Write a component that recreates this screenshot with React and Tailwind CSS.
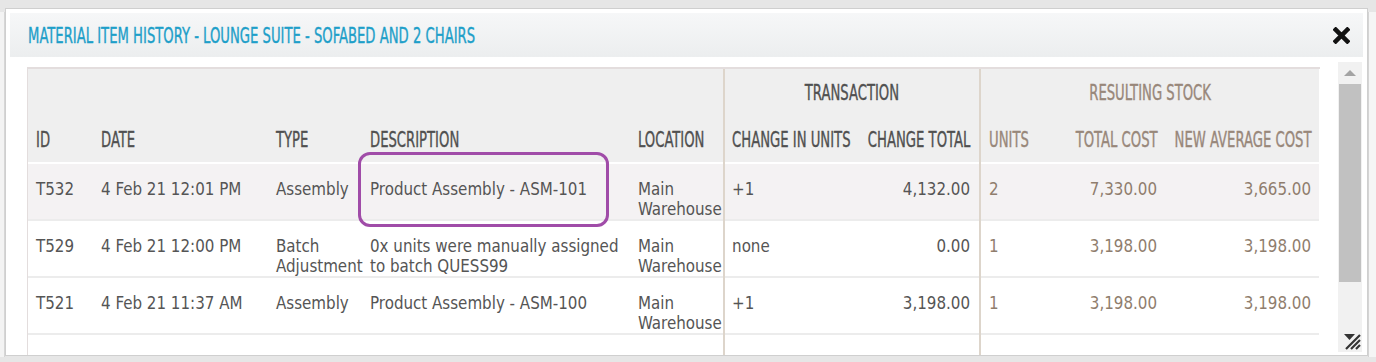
import React from "react";

const head = { fontFamily: '"DejaVu Sans Condensed", "DejaVu Sans", sans-serif' };
const body = { fontFamily: '"DejaVu Sans Condensed", "DejaVu Sans", sans-serif' };

const rows = [
  { id: "T532", date: "4 Feb 21 12:01 PM", type: "Assembly", desc: "Product Assembly - ASM-101", change: "+1", total: "4,132.00", units: "2", cost: "7,330.00", avg: "3,665.00", hi: true },
  { id: "T529", date: "4 Feb 21 12:00 PM", type: "Batch Adjustment", desc: "0x units were manually assigned to batch QUESS99", change: "none", total: "0.00", units: "1", cost: "3,198.00", avg: "3,198.00" },
  { id: "T521", date: "4 Feb 21 11:37 AM", type: "Assembly", desc: "Product Assembly - ASM-100", change: "+1", total: "3,198.00", units: "1", cost: "3,198.00", avg: "3,198.00" },
];

function CloseIcon() {
  return (
    <svg width="17" height="17" viewBox="0 0 16 16">
      <path d="M2.5 2.5 L13.5 13.5 M13.5 2.5 L2.5 13.5" stroke="#111" strokeWidth="4.2" strokeLinecap="square" />
    </svg>
  );
}

function Grip() {
  return (
    <svg width="18" height="18" viewBox="0 0 18 18">
      <path d="M1 2 L12 2 L6.5 8 Z" fill="#333" />
      <path d="M3 17 L17 3 M8 17 L17 8 M13 17 L17 13" stroke="#333" strokeWidth="2.2" />
    </svg>
  );
}

// narrow caps label: condensed face squeezed horizontally
function H({ children, align = "left" }) {
  const j = align === "right" ? "justify-end" : align === "center" ? "justify-center" : "justify-start";
  const o = align === "right" ? "origin-right" : align === "center" ? "origin-center" : "origin-left";
  return (
    <div className={`flex ${j}`}>
      <span className={`inline-block whitespace-nowrap scale-x-[0.715] [-webkit-text-stroke:0.35px] ${o}`}>{children}</span>
    </div>
  );
}

export default function App() {
  return (
    <div className="w-[1376px] h-[362px] bg-[#e6e6e6] relative overflow-hidden">
      {/* page behind */}
      <div className="absolute left-0 top-[12px] w-[5px] h-[345px] bg-[#f3f3f3] border-r border-[#d6d6d6]" />
      <div className="absolute right-0 top-[12px] w-[8px] h-[345px] bg-[#f5f5f5] border-l border-[#d4d4d4]" />

      <div className="absolute left-[5px] top-[8px] w-[1363px] h-[348px] bg-white border border-[#cfcfcf] flex flex-col">
        <div className="mx-[4px] mt-[4px] h-[44px] bg-gradient-to-b from-[#f6f7f8] to-[#eceeef] flex items-center justify-between pl-[18px] pr-[13px]">
          <div className="text-[20.5px] leading-[24px] text-[#1e9fc9] pt-[1px]" style={head}>
            <H>MATERIAL ITEM HISTORY - LOUNGE SUITE - SOFABED AND 2 CHAIRS</H>
          </div>
          <CloseIcon />
        </div>

        <div className="flex flex-1 min-h-0 pt-[5px]">
          <div className="ml-[21px] mt-[5px] w-[1293px] border-t-2 border-l border-[#e3dddd] overflow-hidden">
            <table className="w-[1291px] table-fixed border-collapse">
              <colgroup>
                <col className="w-[64px]" />
                <col className="w-[175px]" />
                <col className="w-[94px]" />
                <col className="w-[268px]" />
                <col className="w-[95px]" />
                <col className="w-[137px]" />
                <col className="w-[119px]" />
                <col className="w-[79px]" />
                <col className="w-[106px]" />
                <col className="w-[154px]" />
              </colgroup>
              <thead className="bg-[#efefef] text-[20.5px] leading-[24px] text-[#505050]" style={head}>
                <tr className="h-[48px]">
                  <th colSpan={5} />
                  <th colSpan={2} className="font-normal border-l-2 border-[#ddd5cb]"><H align="center">TRANSACTION</H></th>
                  <th colSpan={3} className="font-normal text-[#98877a] border-l-2 border-[#ddd5cb]"><H align="center">RESULTING STOCK</H></th>
                </tr>
                <tr className="h-[46px] border-b-2 border-white">
                  <th className="font-normal pl-[8px]"><H>ID</H></th>
                  <th className="font-normal pl-[9px]"><H>DATE</H></th>
                  <th className="font-normal pl-[9px]"><H>TYPE</H></th>
                  <th className="font-normal pl-[9px]"><H>DESCRIPTION</H></th>
                  <th className="font-normal pl-[9px]"><H>LOCATION</H></th>
                  <th className="font-normal pl-[7px] border-l-2 border-[#ddd5cb]"><H>CHANGE IN UNITS</H></th>
                  <th className="font-normal pr-[9px]"><H align="right">CHANGE TOTAL</H></th>
                  <th className="font-normal pl-[8px] text-[#98877a] border-l-2 border-[#ddd5cb]"><H>UNITS</H></th>
                  <th className="font-normal pr-[8px] text-[#98877a]"><H align="right">TOTAL COST</H></th>
                  <th className="font-normal pr-[8px] text-[#98877a]"><H align="right">NEW AVERAGE COST</H></th>
                </tr>
              </thead>
              <tbody className="text-[16.8px] leading-[20px] text-[#555555]" style={body}>
                {rows.map((r) => (
                  <tr key={r.id} className={`h-[55px] align-top border-t-2 border-[#ececec] ${r.hi ? "bg-[#f4f2f3]" : "bg-white"}`}>
                    <td className="pl-[8px] pt-[15px]">{r.id}</td>
                    <td className="pl-[9px] pt-[15px]">{r.date}</td>
                    <td className="pl-[9px] pt-[15px]">{r.type}</td>
                    <td className="pl-[9px] pt-[15px] pr-[6px] relative">
                      {r.desc}
                      {r.hi && (
                        <div className="absolute left-[-3px] top-[-12px] w-[251px] h-[75px] border-[3px] border-[#a04ca8] rounded-[12px]" />
                      )}
                    </td>
                    <td className="pl-[9px] pt-[15px]">Main Warehouse</td>
                    <td className="pl-[7px] pt-[15px] border-l-2 border-[#ddd5cb]">{r.change}</td>
                    <td className="pr-[9px] pt-[15px] text-right">{r.total}</td>
                    <td className="pl-[8px] pt-[15px] text-[#8f7d6d] border-l-2 border-[#ddd5cb]">{r.units}</td>
                    <td className="pr-[8px] pt-[15px] text-right text-[#8f7d6d]">{r.cost}</td>
                    <td className="pr-[8px] pt-[15px] text-right text-[#8f7d6d]">{r.avg}</td>
                  </tr>
                ))}
                <tr className="h-[40px] border-t-2 border-[#ececec]">
                  <td colSpan={5} />
                  <td colSpan={2} className="border-l-2 border-[#ddd5cb]" />
                  <td colSpan={3} className="border-l-2 border-[#ddd5cb]" />
                </tr>
              </tbody>
            </table>
          </div>

          <div className="ml-[18px] w-[24px] h-[290px] bg-[#f1f1f1] flex flex-col items-center">
            <div className="h-[22px] flex items-center justify-center">
              <div className="w-0 h-0 border-l-[6px] border-r-[6px] border-b-[6px] border-l-transparent border-r-transparent border-b-[#a3a3a3]" />
            </div>
            <div className="w-[22px] h-[198px] bg-[#c1c1c1]" />
            <div className="flex-1" />
            <div className="pb-[2px] pl-[4px]">
              <Grip />
            </div>
          </div>
        </div>
      </div>
    </div>
  );
}
